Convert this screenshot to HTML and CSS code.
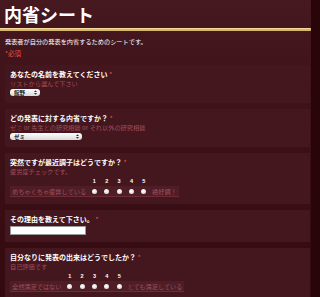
FILE: index.html
```html
<!DOCTYPE html>
<html lang="ja">

<head>
    <meta charset="UTF-8" />
    <meta name="viewport" content="width=device-width, initial-scale=1.0" />
    <title>内省シート</title>
    <link rel="stylesheet" href="styles.css">
</head>

<body>
    <div class="page">
        <header>
            <h1>内省シート</h1>
            <div class="rule"></div>
            <p class="desc">発表者が自分の発表を内省するためのシートです。</p>
            <p class="req">*必須</p>
        </header>

        <div class="item">
            <div class="q">あなたの名前を教えてください <span class="star">*</span></div>
            <div class="help">リストから選んで下さい</div>
            <div class="select short">館野
                <svg class="arrows" viewBox="0 0 4 6" width="3" height="5"><path d="M2 0 L4 2.3 L0 2.3 Z M2 6 L4 3.7 L0 3.7 Z" fill="#333"/></svg>
            </div>
        </div>

        <div class="item">
            <div class="q">どの発表に対する内省ですか？ <span class="star">*</span></div>
            <div class="help">ゼミ or 先生との研究相談 or それ以外の研究相談</div>
            <div class="select long">ゼミ
                <svg class="arrows" viewBox="0 0 4 6" width="3" height="5"><path d="M2 0 L4 2.3 L0 2.3 Z M2 6 L4 3.7 L0 3.7 Z" fill="#333"/></svg>
            </div>
        </div>

        <div class="item">
            <div class="q">突然ですが最近調子はどうですか？ <span class="star">*</span></div>
            <div class="help">疲労度チェックです。</div>
            <table class="scale">
                <tr class="nums">
                    <td></td><td>1</td><td>2</td><td>3</td><td>4</td><td>5</td><td></td>
                </tr>
                <tr class="choices">
                    <td class="end">めちゃくちゃ疲弊している</td>
                    <td><span class="radio"></span></td>
                    <td><span class="radio"></span></td>
                    <td><span class="radio"></span></td>
                    <td><span class="radio"></span></td>
                    <td><span class="radio"></span></td>
                    <td class="end">絶好調！</td>
                </tr>
            </table>
        </div>

        <div class="item">
            <div class="q">その理由を教えて下さい。 <span class="star">*</span></div>
            <div class="text-input"></div>
        </div>

        <div class="item">
            <div class="q">自分なりに発表の出来はどうでしたか？ <span class="star">*</span></div>
            <div class="help">自己評価です</div>
            <table class="scale">
                <tr class="nums">
                    <td></td><td>1</td><td>2</td><td>3</td><td>4</td><td>5</td><td></td>
                </tr>
                <tr class="choices">
                    <td class="end">全然満足ではない</td>
                    <td><span class="radio"></span></td>
                    <td><span class="radio"></span></td>
                    <td><span class="radio"></span></td>
                    <td><span class="radio"></span></td>
                    <td><span class="radio"></span></td>
                    <td class="end">とても満足している</td>
                </tr>
            </table>
        </div>
    </div>
</body>

</html>
```

FILE: styles.css
```css
:root {
    --bg: #3d1118;
    --outer: #29050a;
    --item: #44161d;
    --gap: #330a10;
    --gold: #dcb66a;
    --dim: #a04e5c;
    --red: #e8504a;
}

body {
    margin: 0;
    background-color: var(--outer);
    color: white;
    font-family: "Noto Sans CJK JP", "Liberation Sans", sans-serif;
    overflow: hidden;
}

.page {
    width: 311px;
    min-height: 297px;
    background: linear-gradient(180deg, #461820 0%, var(--bg) 40%, var(--gap) 100%);
}

header h1 {
    margin: 0;
    padding: 2px 0 0 4px;
    font-size: 18px;
    line-height: 24px;
    font-weight: bold;
}

header .rule {
    margin-top: 2px;
    height: 2px;
    background: var(--gold);
    border-top: 1px solid #f3dca0;
    border-radius: 0 1px 1px 0;
}

header .desc {
    margin: 6px 0 0 5px;
    font-size: 6.2px;
    line-height: 10px;
}

header .req {
    margin: 1px 0 0 5px;
    font-size: 6.5px;
    line-height: 10px;
    color: var(--red);
}

.item {
    margin: 7px 0 0 5px;
    width: 300px;
    padding: 4px 0 7px 5px;
    background-color: var(--item);
}

.item + .item {
    margin-top: 6px;
}

.item .q {
    font-size: 7px;
    line-height: 10px;
    font-weight: bold;
}

.item .star {
    color: var(--red);
    font-weight: normal;
}

.item .help {
    font-size: 6.2px;
    line-height: 9px;
    color: var(--dim);
}

.select {
    margin-top: 1px;
    height: 7px;
    display: flex;
    align-items: center;
    justify-content: space-between;
    padding: 0 3px 0 4px;
    box-sizing: border-box;
    font-size: 5.5px;
    font-weight: bold;
    color: #222;
    background: linear-gradient(180deg, #ffffff, #d8d8d8);
    border-radius: 3px;
}

.select.short {
    width: 30px;
}

.select.long {
    width: 72px;
}

.text-input {
    margin-top: 2px;
    width: 76px;
    height: 9px;
    background: #ffffff;
    border: 1px solid #999;
    box-sizing: border-box;
}

.scale {
    margin-top: 1px;
    border-collapse: collapse;
}

.scale td {
    padding: 0;
    text-align: center;
}

.scale .nums td {
    font-family: "Liberation Sans", sans-serif;
    font-size: 5.5px;
    font-weight: bold;
    line-height: 9px;
    width: 12.4px;
}

.scale .nums td:first-child,
.scale .nums td:last-child {
    width: auto;
}

.scale .choices {
    background-color: #4e1d25;
    border-bottom: 1px solid #6c2b35;
}

.scale .choices td {
    height: 10px;
}

.scale .end {
    font-size: 6.2px;
    color: var(--dim);
    padding: 0 2px;
    white-space: nowrap;
}

.radio {
    display: block;
    margin: 0 auto;
    width: 5px;
    height: 5px;
    border-radius: 50%;
    background: radial-gradient(circle at 40% 35%, #ffffff, #cfcfcf);
}
```
